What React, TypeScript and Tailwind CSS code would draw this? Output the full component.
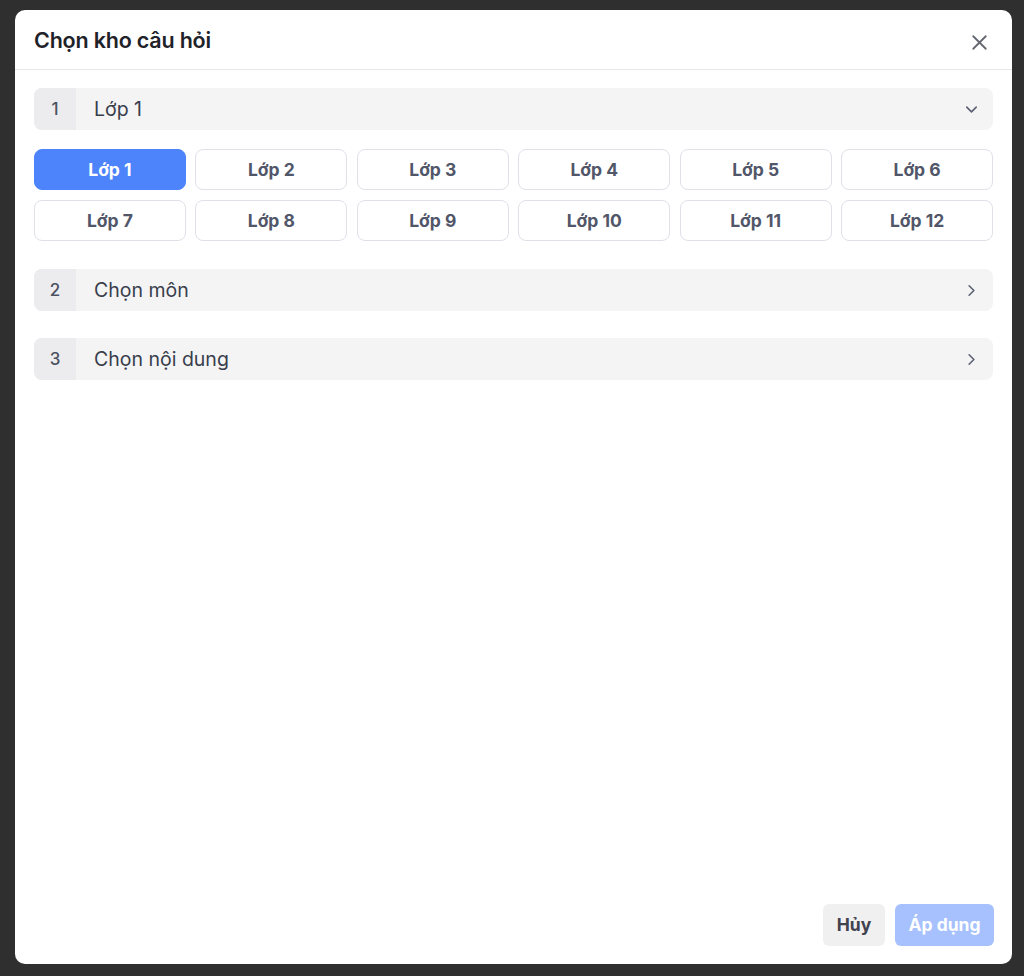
import React from 'react';
import { X, ChevronDown, ChevronRight } from 'lucide-react';

const GRADES = Array.from({ length: 12 }, (_, i) => `Lớp ${i + 1}`);

const StepHeader: React.FC<{ num: number; label: string; open?: boolean }> = ({ num, label, open }) => (
  <div className="h-[42px] rounded-[8px] bg-[#f4f4f5] flex items-center overflow-hidden">
    <div className="w-[42px] h-full bg-[#ececee] flex items-center justify-center pt-[1px] text-[17px] font-medium text-[#4b5161]">
      {num}
    </div>
    <span className="pl-[18px] pt-[1px] flex-1 text-[19.5px] text-[#393e4c]">{label}</span>
    <span className="pr-[12px] text-[#5b6072]">
      {open ? <ChevronDown size={19} strokeWidth={2} /> : <ChevronRight size={19} strokeWidth={2} />}
    </span>
  </div>
);

export default function App() {
  const [grade, setGrade] = React.useState(0);

  return (
    <div className="h-[976px] bg-[#2f2f2f] pt-[10px] pl-[15px] font-['Inter','Noto_Sans',sans-serif]">
      <div className="w-[997px] h-[954px] rounded-[10px] bg-white flex flex-col">
        {/* Header */}
        <div className="h-[60px] shrink-0 border-b border-[#e6e7eb] flex items-center justify-between pl-[19px] pr-[20px] pt-[2px]">
          <h2 className="text-[21.5px] font-semibold text-[#1f2229] tracking-[-0.2px]">Chọn kho câu hỏi</h2>
          <button className="mt-[4px] text-[#63666e]">
            <X size={25} strokeWidth={1.7} />
          </button>
        </div>

        {/* Body */}
        <div className="flex-1 px-[19px] pt-[18px]">
          <StepHeader num={1} label="Lớp 1" open />

          <div className="mt-[19px] grid grid-cols-6 gap-x-[9.6px] gap-y-[10px]">
            {GRADES.map((g, i) => (
              <button
                key={g}
                onClick={() => setGrade(i)}
                className={`h-[41px] pt-[1px] rounded-[8px] text-[17.5px] font-bold border ${
                  grade === i
                    ? 'bg-[#4d83fb] border-[#4d83fb] text-white'
                    : 'bg-white border-[#dfe1e8] text-[#515669]'
                }`}
              >
                {g}
              </button>
            ))}
          </div>

          <div className="mt-[28px]">
            <StepHeader num={2} label="Chọn môn" />
          </div>
          <div className="mt-[27px]">
            <StepHeader num={3} label="Chọn nội dung" />
          </div>
        </div>

        {/* Footer */}
        <div className="flex justify-end gap-[10px] pr-[18px] pb-[18px]">
          <button className="w-[62px] h-[42px] rounded-[6px] bg-[#f0f0f0] text-[17.5px] font-bold text-[#40424f]">
            Hủy
          </button>
          <button className="w-[99px] h-[42px] rounded-[6px] bg-[#a6c1fd] text-[17.5px] font-bold text-white">
            Áp dụng
          </button>
        </div>
      </div>
    </div>
  );
}
